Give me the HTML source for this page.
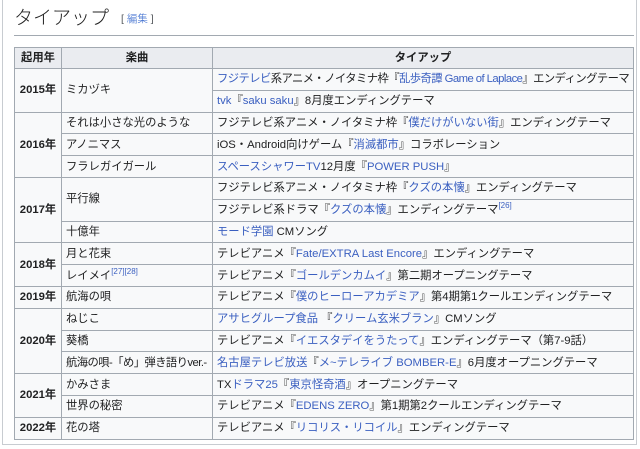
<!DOCTYPE html>
<html><head><meta charset="utf-8"><style>
body{margin:0;width:640px;height:449px;background:#fff;overflow:hidden;font-family:"Liberation Sans","Noto Sans CJK JP",sans-serif;color:#202122;position:relative}
.frame{position:absolute;left:2px;top:-2px;width:635px;height:447px;border:1px solid #c8ccd1;border-top:none;box-sizing:border-box}
h2{position:absolute;left:14px;top:6px;margin:0;font-weight:300;font-size:19px;line-height:26px;color:#222}
h2 span{font-size:10.5px;color:#54595d;margin-left:12px;vertical-align:middle}
h2 span a{color:#3366cc}
.rule{position:absolute;left:14px;top:35px;width:620px;height:1px;background:#a2a9b1}
.wrap{position:absolute;left:14px;top:47px;width:621px;overflow:hidden}
table{width:620px;border-collapse:collapse;table-layout:fixed;font-size:11.3px;background:#f8f9fa}
td,th{border:1px solid #a2a9b1;padding:0 4px;height:20.8px;white-space:nowrap;line-height:14px;overflow:hidden}
th{background:#eaecf0;font-weight:bold;text-align:center;height:20px}
td.y{font-weight:bold;text-align:center;padding:0 1px}
a{color:#3a5fc0;text-decoration:none}
sup{font-size:8px;line-height:0;color:#3a5fc0}
.t{letter-spacing:-0.55px}
</style></head><body>
<div class="frame"></div>
<h2>タイアップ<span>[ <a>編集</a> ]</span></h2>
<div class="rule"></div>
<div class="wrap">
<table>
<colgroup><col style="width:47px"><col style="width:151px"><col></colgroup>
<tr><th>起用年</th><th>楽曲</th><th>タイアップ</th></tr>
<tr><td class="y" rowspan="2">2015年</td><td rowspan="2">ミカヅキ</td><td class="t"><a>フジテレビ</a>系アニメ・ノイタミナ枠『<a>乱歩奇譚 Game of Laplace</a>』エンディングテーマ</td></tr>
<tr><td><a>tvk</a>『<a>saku saku</a>』8月度エンディングテーマ</td></tr>
<tr><td class="y" rowspan="3">2016年</td><td>それは小さな光のような</td><td>フジテレビ系アニメ・ノイタミナ枠『<a>僕だけがいない街</a>』エンディングテーマ</td></tr>
<tr><td>アノニマス</td><td>iOS・Android向けゲーム『<a>消滅都市</a>』コラボレーション</td></tr>
<tr><td>フラレガイガール</td><td><a>スペースシャワーTV</a>12月度『<a>POWER PUSH</a>』</td></tr>
<tr><td class="y" rowspan="3">2017年</td><td rowspan="2">平行線</td><td>フジテレビ系アニメ・ノイタミナ枠『<a>クズの本懐</a>』エンディングテーマ</td></tr>
<tr><td>フジテレビ系ドラマ『<a>クズの本懐</a>』エンディングテーマ<sup>[26]</sup></td></tr>
<tr><td>十億年</td><td><a>モード学園</a> CMソング</td></tr>
<tr><td class="y" rowspan="2">2018年</td><td>月と花束</td><td>テレビアニメ『<a>Fate/EXTRA Last Encore</a>』エンディングテーマ</td></tr>
<tr><td>レイメイ<sup>[27][28]</sup></td><td>テレビアニメ『<a>ゴールデンカムイ</a>』第二期オープニングテーマ</td></tr>
<tr><td class="y">2019年</td><td>航海の唄</td><td>テレビアニメ『<a>僕のヒーローアカデミア</a>』第4期第1クールエンディングテーマ</td></tr>
<tr><td class="y" rowspan="3">2020年</td><td>ねじこ</td><td><a>アサヒグループ食品</a> 『<a>クリーム玄米ブラン</a>』CMソング</td></tr>
<tr><td>葵橋</td><td>テレビアニメ『<a>イエスタデイをうたって</a>』エンディングテーマ（第7-9話）</td></tr>
<tr><td class="t">航海の唄-「め」弾き語りver.-</td><td><a>名古屋テレビ放送</a>『<a>メ~テレライブ BOMBER-E</a>』6月度オープニングテーマ</td></tr>
<tr><td class="y" rowspan="2">2021年</td><td>かみさま</td><td>TX<a>ドラマ25</a>『<a>東京怪奇酒</a>』オープニングテーマ</td></tr>
<tr><td>世界の秘密</td><td>テレビアニメ『<a>EDENS ZERO</a>』第1期第2クールエンディングテーマ</td></tr>
<tr><td class="y">2022年</td><td>花の塔</td><td>テレビアニメ『<a>リコリス・リコイル</a>』エンディングテーマ</td></tr>
</table>
</div>
</body></html>
